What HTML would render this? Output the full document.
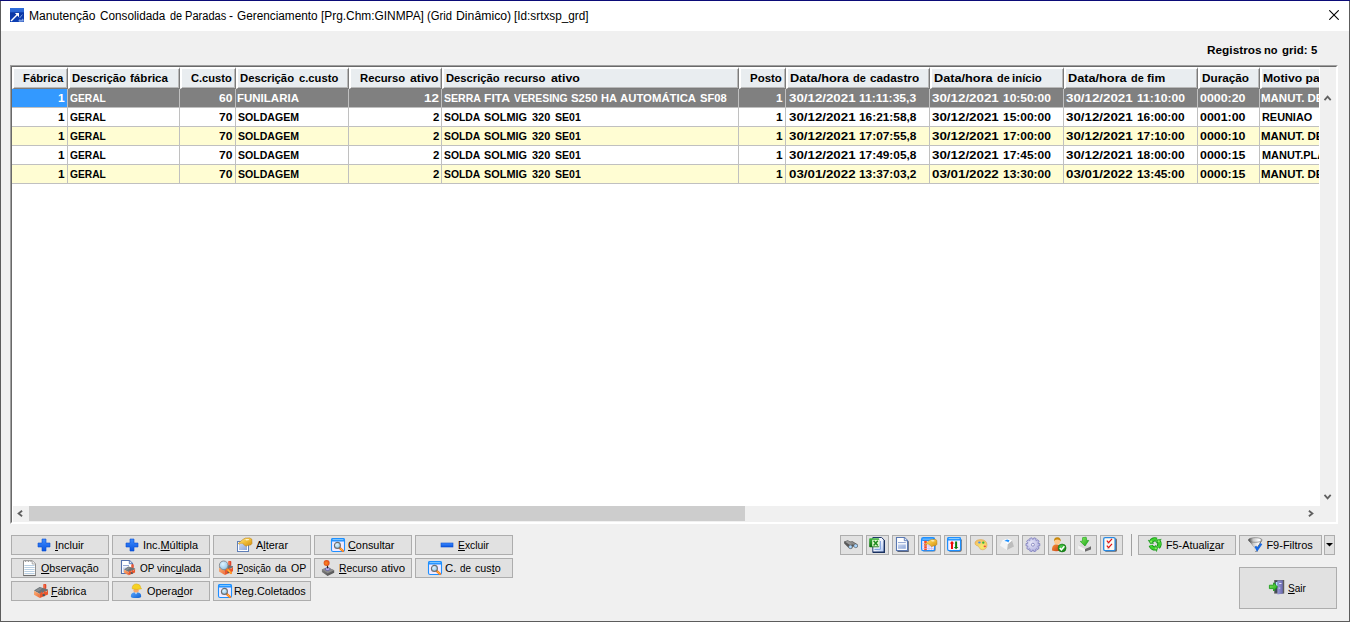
<!DOCTYPE html>
<html>
<head>
<meta charset="utf-8">
<title>Manutenção Consolidada de Paradas</title>
<style>
*{box-sizing:border-box;margin:0;padding:0}
html,body{width:1350px;height:622px;overflow:hidden;background:#f0f0f0}
body{position:relative;font-family:"Liberation Sans",sans-serif;font-size:11px;color:#000}
div,span,svg{position:absolute}
.t{white-space:nowrap;line-height:16px;height:16px;transform-origin:0 0}
u{text-decoration:underline;text-underline-offset:1px}
.ic{overflow:visible}
#titlebar{left:1px;top:1px;width:1348px;height:30px;background:#fff}
#topline{left:0;top:0;width:1350px;height:1px;background:#0b0b78}
#topgap{left:60px;top:0;width:20px;height:1px;background:#7a7a7a}
#lframe{left:0;top:1px;width:1px;height:621px;background:#5c5c5c}
#rframe{left:1349px;top:1px;width:1px;height:621px;background:#5c5c5c}
#bframe{left:0;top:621px;width:1350px;height:1px;background:#5c5c5c}
#grid{left:10px;top:65px;width:1328px;height:459px;background:#fff;border-style:solid;border-width:1px;border-color:#a0a0a0 #fff #fff #a0a0a0}
#gridin{left:11px;top:66px;width:1326px;height:457px;border-style:solid;border-width:1px;border-color:#696969 #fff #fff #696969}
#vsb{left:1320px;top:67px;width:16px;height:439px;background:#f0f0f0}
#hsb{left:13px;top:506px;width:1323px;height:16px;background:#f0f0f0}
#hthumb{left:29px;top:506px;width:716px;height:15px;background:#cdcdcd}
.h{top:67px;height:22px;background:#e9edf0;border-style:solid;border-color:#fff #7b7b7b #7b7b7b #fff;border-width:2px 1px 1px 2px}
.h i{position:absolute;right:0;top:0;bottom:0;width:1px;background:#b9b9b9}
.h b{position:absolute;left:0;right:0;bottom:0;height:1px;background:#b9b9b9}
.r{left:12px;width:1307px;height:18px}
.hl{left:12px;width:1307px;height:1px;background:#c0c0c0}
.vl{top:89px;width:1px;height:95px;background:#c0c0c0}
#clip{left:1260px;top:67px;width:59px;height:120px;overflow:hidden}
.btn{height:20px;background:#e1e1e1;border:1px solid #adadad}
</style>
</head>
<body>
<svg width="0" height="0" style="left:0;top:0"><defs>
<linearGradient id="gPlus" x1="0" y1="0" x2="0" y2="1"><stop offset="0" stop-color="#3d8bff"/><stop offset="1" stop-color="#0a55e0"/></linearGradient>
<linearGradient id="gGold" x1="0" y1="0" x2="1" y2="1"><stop offset="0" stop-color="#ffe9a0"/><stop offset=".45" stop-color="#f3c23c"/><stop offset="1" stop-color="#d08c12"/></linearGradient>
<linearGradient id="gForm" x1="0" y1="0" x2="1" y2="1"><stop offset="0" stop-color="#c9d6f0"/><stop offset="1" stop-color="#8fa8d8"/></linearGradient>
<linearGradient id="gWallL" x1="0" y1="0" x2="1" y2="1"><stop offset="0" stop-color="#f9b27a"/><stop offset="1" stop-color="#ee6a34"/></linearGradient>
<linearGradient id="gBody" x1="0" y1="0" x2="1" y2="1"><stop offset="0" stop-color="#5aa8ff"/><stop offset="1" stop-color="#0f5fd0"/></linearGradient>
<radialGradient id="gGlass" cx=".4" cy=".35" r=".7"><stop offset="0" stop-color="#dff4ff"/><stop offset="1" stop-color="#8fc4e6"/></radialGradient>
<radialGradient id="gBall" cx=".45" cy=".55" r=".6"><stop offset="0" stop-color="#ff8a20"/><stop offset="1" stop-color="#d8401c"/></radialGradient>
<linearGradient id="gBase" x1="0" y1="0" x2="1" y2="1"><stop offset="0" stop-color="#8a8a8a"/><stop offset="1" stop-color="#4a4a4a"/></linearGradient>
<linearGradient id="gSheet" x1="0" y1="0" x2="1" y2="1"><stop offset="0" stop-color="#ffffff"/><stop offset=".5" stop-color="#eef3ff"/><stop offset="1" stop-color="#a4bff0"/></linearGradient>
<linearGradient id="gGreenBox" x1="0" y1="0" x2="0" y2="1"><stop offset="0" stop-color="#3fb53f"/><stop offset="1" stop-color="#0a6a0a"/></linearGradient>
<radialGradient id="gPal" cx=".6" cy=".7" r=".8"><stop offset="0" stop-color="#f6ee6a"/><stop offset="1" stop-color="#f2b868"/></radialGradient>
<radialGradient id="gGear" cx=".4" cy=".4" r=".7"><stop offset="0" stop-color="#ececfa"/><stop offset="1" stop-color="#a8a8dc"/></radialGradient>
<radialGradient id="gChk" cx=".4" cy=".35" r=".7"><stop offset="0" stop-color="#4fd04f"/><stop offset="1" stop-color="#0d7a0d"/></radialGradient>
<linearGradient id="gUser" x1="0" y1="0" x2="1" y2="1"><stop offset="0" stop-color="#f59030"/><stop offset="1" stop-color="#c8401c"/></linearGradient>
<linearGradient id="gArrG" x1="0" y1="0" x2="1" y2="1"><stop offset="0" stop-color="#8af060"/><stop offset="1" stop-color="#18a018"/></linearGradient>
<linearGradient id="gFun" x1="0" y1="0" x2="1" y2="0"><stop offset="0" stop-color="#3a3a3a"/><stop offset=".35" stop-color="#c8c8c8"/><stop offset=".8" stop-color="#ffffff"/><stop offset="1" stop-color="#b0b0b0"/></linearGradient>
<linearGradient id="gDoor" x1="0" y1="0" x2="1" y2="0"><stop offset="0" stop-color="#9a9ad8"/><stop offset="1" stop-color="#6a6ab0"/></linearGradient>
<linearGradient id="gApp" x1="0" y1="0" x2="0" y2="1"><stop offset="0" stop-color="#2f6edc"/><stop offset=".28" stop-color="#2a64d2"/><stop offset=".34" stop-color="#0a35a2"/><stop offset="1" stop-color="#0d3fb4"/></linearGradient>
</defs></svg>
<div id="titlebar"></div><div id="topline"></div><div id="topgap"></div><div id="lframe"></div><div id="rframe"></div><div id="bframe"></div>
<svg class="ic" style="left:10px;top:8px" width="14" height="14" viewBox="0 0 14 14"><rect x="0" y="0" width="14" height="14" fill="url(#gApp)"/><path d="M1 13L7.4 6.6" stroke="#fff" stroke-width="1.4"/><path d="M4.9 5.1H9V9.2z" fill="#fff"/><path d="M9.6 10L12.4 6.6" stroke="#9ab8f0" stroke-width="1" opacity=".8"/><path d="M8.4 12.6L10 11L11 12.4L12.4 10.4L13.6 11.4L13.8 13.6L9 13.8z" fill="#a8c4f4" opacity=".75"/></svg>
<svg style="left:1329px;top:10px" width="10" height="10" viewBox="0 0 10 10"><path d="M0.3 0.3L9.7 9.7M9.7 0.3L0.3 9.7" stroke="#000" stroke-width="1.1" fill="none"/></svg>
<div id="grid"></div><div id="gridin"></div>
<div class="h" style="left:12px;width:56px"><i></i><b></b></div>
<div class="h" style="left:68px;width:112px"><i></i><b></b></div>
<div class="h" style="left:180px;width:56px"><i></i><b></b></div>
<div class="h" style="left:236px;width:113px"><i></i><b></b></div>
<div class="h" style="left:349px;width:93px"><i></i><b></b></div>
<div class="h" style="left:442px;width:297px"><i></i><b></b></div>
<div class="h" style="left:739px;width:47px"><i></i><b></b></div>
<div class="h" style="left:786px;width:144px"><i></i><b></b></div>
<div class="h" style="left:930px;width:134px"><i></i><b></b></div>
<div class="h" style="left:1064px;width:134px"><i></i><b></b></div>
<div class="h" style="left:1198px;width:62px"><i></i><b></b></div>
<div class="h" style="left:1260px;width:59px;border-right:0"><b></b></div>
<div class="r" style="top:89px;background:#808080"></div>
<div class="r" style="top:108px;background:#fff"></div>
<div class="r" style="top:127px;background:#fffdd3"></div>
<div class="r" style="top:146px;background:#fff"></div>
<div class="r" style="top:165px;background:#fffdd3"></div>
<div style="left:12px;top:89px;width:55px;height:18px;background:#3399ff"></div>
<div class="hl" style="top:107px"></div>
<div class="hl" style="top:126px"></div>
<div class="hl" style="top:145px"></div>
<div class="hl" style="top:164px"></div>
<div class="hl" style="top:183px"></div>
<div class="vl" style="left:67px"></div>
<div class="vl" style="left:179px"></div>
<div class="vl" style="left:235px"></div>
<div class="vl" style="left:348px"></div>
<div class="vl" style="left:441px"></div>
<div class="vl" style="left:738px"></div>
<div class="vl" style="left:785px"></div>
<div class="vl" style="left:929px"></div>
<div class="vl" style="left:1063px"></div>
<div class="vl" style="left:1197px"></div>
<div class="vl" style="left:1259px"></div>
<div id="vsb"></div><div id="hsb"></div><div id="hthumb"></div>
<svg style="left:1323px;top:94px" width="10" height="8" viewBox="0 0 10 8"><path d="M1.5 6.1L4.6 2.7L7.7 6.1" stroke="#606060" stroke-width="1.8" fill="none"/></svg>
<svg style="left:1323px;top:493px" width="10" height="8" viewBox="0 0 10 8"><path d="M1.5 1.9L4.6 5.3L7.7 1.9" stroke="#606060" stroke-width="1.8" fill="none"/></svg>
<svg style="left:16px;top:509px" width="8" height="10" viewBox="0 0 8 10"><path d="M6.1 1.8L2.6 4.5L6.1 7.2" stroke="#606060" stroke-width="1.8" fill="none"/></svg>
<svg style="left:1307px;top:509px" width="8" height="10" viewBox="0 0 8 10"><path d="M1.9 1.8L5.4 4.5L1.9 7.2" stroke="#606060" stroke-width="1.8" fill="none"/></svg>
<div id="clip"><span class="t" style="left:3.34px;top:3.02px;font-size:11.5px;font-weight:bold;transform:scaleX(1.0566);">Motivo pa</span><span class="t" style="left:1.36px;top:23.19px;font-size:11px;font-weight:bold;color:#fff;transform:scaleX(1.0431);">MANUT. DE</span><span class="t" style="left:1.51px;top:42.19px;font-size:11px;font-weight:bold;transform:scaleX(0.99);">REUNIAO</span><span class="t" style="left:1.36px;top:61.19px;font-size:11px;font-weight:bold;transform:scaleX(1.0431);">MANUT. DE</span><span class="t" style="left:1.51px;top:80.19px;font-size:11px;font-weight:bold;transform:scaleX(0.9945);">MANUT.PLA</span><span class="t" style="left:1.36px;top:99.19px;font-size:11px;font-weight:bold;transform:scaleX(1.0431);">MANUT. DE</span></div>
<div class="btn" style="left:11px;top:535px;width:98px"></div>
<svg class="ic" style="left:36px;top:537px" width="16" height="16" viewBox="0 0 16 16"><path d="M6 2h4v4h4v4h-4v4H6v-4H2V6h4z" fill="url(#gPlus)" stroke="#0a4fd0" stroke-width="0.6" stroke-linejoin="miter"/></svg>
<div class="btn" style="left:112px;top:535px;width:98px"></div>
<svg class="ic" style="left:124px;top:537px" width="16" height="16" viewBox="0 0 16 16"><path d="M6 2h4v4h4v4h-4v4H6v-4H2V6h4z" fill="url(#gPlus)" stroke="#0a4fd0" stroke-width="0.6" stroke-linejoin="miter"/></svg>
<div class="btn" style="left:213px;top:535px;width:98px"></div>
<svg class="ic" style="left:236px;top:537px" width="16" height="16" viewBox="0 0 16 16"><rect x="1.5" y="4.5" width="11" height="10" fill="#fff" stroke="#5f7fb8"/><rect x="3" y="7" width="8" height="6" fill="url(#gForm)"/><g transform="translate(2.2,0.9)"><path d="M0 5.6L2.2 3.6L4.6 1.6L7 0.2L11.5 0L13.6 1.2L13.8 5.6L12.6 7L9.4 7.6L7.6 8.4L6.2 7L4.4 5.6L2.6 5.4L1 6.4z" fill="url(#gGold)" stroke="#b57a10" stroke-width="0.5"/><path d="M7 1.2L10.5 1L11 2.2L8 2.6z" fill="#fff6d8" opacity=".9"/></g></svg>
<div class="btn" style="left:314px;top:535px;width:98px"></div>
<svg class="ic" style="left:330px;top:537px" width="16" height="16" viewBox="0 0 16 16"><rect x="1.5" y="1.5" width="13" height="13" rx="1.6" fill="#f1eaff" stroke="#1e90ff" stroke-width="1.1"/><path d="M1.2 4.4V2.6Q1.2 1.1 2.7 1.1H13.3Q14.8 1.1 14.8 2.6V4.4z" fill="#1e90ff"/><rect x="2.6" y="2.2" width="10.8" height="0.9" fill="#8fd0ff"/><path d="M9.6 10.8L12.9 13.9" stroke="#ff7a1a" stroke-width="2.3" stroke-linecap="round"/><path d="M10.4 11.5L12.6 13.6" stroke="#ffd83a" stroke-width="0.8"/><circle cx="7.4" cy="8.4" r="3" fill="url(#gGlass)" stroke="#6e6e6e" stroke-width="1.1"/></svg>
<div class="btn" style="left:415px;top:535px;width:98px"></div>
<svg class="ic" style="left:439px;top:537px" width="16" height="16" viewBox="0 0 16 16"><rect x="2" y="6" width="12" height="4" fill="url(#gPlus)" stroke="#0a4fd0" stroke-width="0.6"/></svg>
<div class="btn" style="left:11px;top:558px;width:98px"></div>
<svg class="ic" style="left:21px;top:560px" width="16" height="16" viewBox="0 0 16 16"><path d="M2.5 0.7H11.4L14.5 3.8V15.4H2.5z" fill="#fff" stroke="#8f8f8f" stroke-width="1"/><path d="M11.2 0.8V4H14.4" fill="#eee" stroke="#9a9a9a" stroke-width=".8"/><path d="M3.4 5.5H13.6M3.4 7.5H13.6M3.4 9.5H13.6M3.4 11.5H13.6M3.4 13.5H13.6" stroke="#b9cfe2" stroke-width="1"/><path d="M2.2 15.6H14.8" stroke="#6a6a6a" stroke-width="1"/><path d="M4.6 0.6v1.4M7.4 0.6v1.4M10 0.6v1.4" stroke="#9a9a9a" stroke-width="1"/></svg>
<div class="btn" style="left:112px;top:558px;width:98px"></div>
<svg class="ic" style="left:120px;top:560px" width="16" height="16" viewBox="0 0 16 16"><path d="M1.5 0.5H9.5L12.5 3.5V13.5H1.5z" fill="#fff" stroke="#5470ac" stroke-width="1.1"/><path d="M9.3 0.6V3.7H12.4" fill="#dfe6f6" stroke="#5470ac" stroke-width=".9"/><path d="M3 5.6H9" stroke="#8c9fd0" stroke-width="1"/><rect x="3" y="7.4" width="5" height="5" fill="#c6d2ee"/><g transform="translate(4,4.2) scale(.79)"><rect x="9.3" y="0" width="3" height="5" rx="0.9" fill="#e2452a"/><rect x="9.3" y="0.3" width="1.3" height="4.5" rx="0.6" fill="#f6825a"/><path d="M0 6.6L5.6 3L14 5.4L14 6.4L6 10z" fill="#6c7276"/><path d="M1.4 6.5L5.7 3.8L8.4 4.6L4.2 7.6z" fill="#858b8f"/><path d="M0 6.8L5.9 9.9L5.9 14L0 10.7z" fill="url(#gWallL)"/><path d="M5.9 9.9L7.6 7.6L9 9.4L10.6 6.6L12 8.2L14 5.8L14 10.4L5.9 14z" fill="#ea562c"/><rect x="8.6" y="10.2" width="2.2" height="2" fill="#3f5862"/></g></svg>
<div class="btn" style="left:213px;top:558px;width:98px"></div>
<svg class="ic" style="left:218px;top:560px" width="16" height="16" viewBox="0 0 16 16"><g transform="translate(1,0.9)"><rect x="9.3" y="0" width="3" height="5" rx="0.9" fill="#e2452a"/><rect x="9.3" y="0.3" width="1.3" height="4.5" rx="0.6" fill="#f6825a"/><path d="M0 6.6L5.6 3L14 5.4L14 6.4L6 10z" fill="#6c7276"/><path d="M1.4 6.5L5.7 3.8L8.4 4.6L4.2 7.6z" fill="#858b8f"/><path d="M0 6.8L5.9 9.9L5.9 14L0 10.7z" fill="url(#gWallL)"/><path d="M5.9 9.9L7.6 7.6L9 9.4L10.6 6.6L12 8.2L14 5.8L14 10.4L5.9 14z" fill="#ea562c"/><rect x="8.6" y="10.2" width="2.2" height="2" fill="#3f5862"/></g><path d="M9.4 9.4L13 13" stroke="#ff8a1a" stroke-width="2.2" stroke-linecap="round"/><path d="M10.2 10L12.6 12.4" stroke="#ffe04a" stroke-width="0.8"/><circle cx="5.7" cy="5.3" r="4.3" fill="url(#gGlass)" stroke="#8a8f94" stroke-width="1"/></svg>
<div class="btn" style="left:314px;top:558px;width:98px"></div>
<svg class="ic" style="left:321px;top:560px" width="16" height="16" viewBox="0 0 16 16"><path d="M0.9 9.2L7 7.4L13.2 10.2L13.2 12.8L6.6 16L0.9 12z" fill="url(#gBase)"/><path d="M0.9 9.2L7 7.4L13.2 10.2L6.6 13.2z" fill="#8c8c8c"/><ellipse cx="6.6" cy="9" rx="2.4" ry="1.5" fill="#b8b0f0" stroke="#4a4a9a" stroke-width=".6"/><path d="M6.3 4.5L6.7 8.4" stroke="#222" stroke-width="1.1"/><circle cx="5.6" cy="2.9" r="3" fill="url(#gBall)"/></svg>
<div class="btn" style="left:415px;top:558px;width:98px"></div>
<svg class="ic" style="left:427px;top:560px" width="16" height="16" viewBox="0 0 16 16"><rect x="1.5" y="1.5" width="13" height="13" rx="1.6" fill="#f1eaff" stroke="#1e90ff" stroke-width="1.1"/><path d="M1.2 4.4V2.6Q1.2 1.1 2.7 1.1H13.3Q14.8 1.1 14.8 2.6V4.4z" fill="#1e90ff"/><rect x="2.6" y="2.2" width="10.8" height="0.9" fill="#8fd0ff"/><path d="M9.6 10.8L12.9 13.9" stroke="#ff7a1a" stroke-width="2.3" stroke-linecap="round"/><path d="M10.4 11.5L12.6 13.6" stroke="#ffd83a" stroke-width="0.8"/><circle cx="7.4" cy="8.4" r="3" fill="url(#gGlass)" stroke="#6e6e6e" stroke-width="1.1"/></svg>
<div class="btn" style="left:11px;top:581px;width:98px"></div>
<svg class="ic" style="left:33px;top:583px" width="16" height="16" viewBox="0 0 16 16"><g transform="translate(1,1)"><rect x="9.3" y="0" width="3" height="5" rx="0.9" fill="#e2452a"/><rect x="9.3" y="0.3" width="1.3" height="4.5" rx="0.6" fill="#f6825a"/><path d="M0 6.6L5.6 3L14 5.4L14 6.4L6 10z" fill="#6c7276"/><path d="M1.4 6.5L5.7 3.8L8.4 4.6L4.2 7.6z" fill="#858b8f"/><path d="M0 6.8L5.9 9.9L5.9 14L0 10.7z" fill="url(#gWallL)"/><path d="M5.9 9.9L7.6 7.6L9 9.4L10.6 6.6L12 8.2L14 5.8L14 10.4L5.9 14z" fill="#ea562c"/><rect x="8.6" y="10.2" width="2.2" height="2" fill="#3f5862"/></g></svg>
<div class="btn" style="left:112px;top:581px;width:98px"></div>
<svg class="ic" style="left:129px;top:583px" width="16" height="16" viewBox="0 0 16 16"><path d="M1.8 13.4Q1.6 9.2 7 9.2Q12.4 9.2 12.2 13.4Q12 15 7 15Q2 15 1.8 13.4z" fill="url(#gBody)"/><path d="M6 9.2L7 11.6L8 9.2z" fill="#fff"/><rect x="4.4" y="5.4" width="5.4" height="4.2" rx="2" fill="#f8a868"/><path d="M3.2 5.8Q3 1 7.6 0.9Q11.6 1 11.8 4.8L12.6 5.8Q8 7 3.2 5.8z" fill="#f6d224" stroke="#d8a810" stroke-width=".5"/></svg>
<div class="btn" style="left:213px;top:581px;width:98px"></div>
<svg class="ic" style="left:217px;top:583px" width="16" height="16" viewBox="0 0 16 16"><rect x="1.5" y="1.5" width="13" height="13" rx="1.6" fill="#f1eaff" stroke="#1e90ff" stroke-width="1.1"/><path d="M1.2 4.4V2.6Q1.2 1.1 2.7 1.1H13.3Q14.8 1.1 14.8 2.6V4.4z" fill="#1e90ff"/><rect x="2.6" y="2.2" width="10.8" height="0.9" fill="#8fd0ff"/><path d="M9.6 10.8L12.9 13.9" stroke="#ff7a1a" stroke-width="2.3" stroke-linecap="round"/><path d="M10.4 11.5L12.6 13.6" stroke="#ffd83a" stroke-width="0.8"/><circle cx="7.4" cy="8.4" r="3" fill="url(#gGlass)" stroke="#6e6e6e" stroke-width="1.1"/></svg>
<div class="btn" style="left:840px;top:535px;width:23px"></div>
<svg class="ic" style="left:843px;top:537px" width="16" height="16" viewBox="0 0 16 16"><path d="M1 4.6L4.8 3.2L7 4.4L9.6 4.2L14.6 7.6L14.6 10L12.6 10.8L10.6 9.6L9.4 9.8L9.6 11L7.6 12L5.2 10.6L1.2 6.4z" fill="#585858"/><path d="M2 4.8L5 3.8L10 7.2L7 8z" fill="#9a9a9a"/><path d="M6.4 5.4L9.4 4.8L13.6 7.6L11.6 8.2z" fill="#8a8a8a"/><circle cx="7.4" cy="9.9" r="1.8" fill="#a8d6ff" stroke="#555" stroke-width=".5"/><circle cx="12.7" cy="8.8" r="1.9" fill="#a8d6ff" stroke="#555" stroke-width=".5"/></svg>
<div class="btn" style="left:866px;top:535px;width:23px"></div>
<svg class="ic" style="left:869px;top:537px" width="16" height="16" viewBox="0 0 16 16"><path d="M3.8 0.5H12.6L15.5 3.4V15.5H3.8z" fill="url(#gSheet)" stroke="#20396b" stroke-width="1"/><path d="M15.3 3.2V15.3H4" fill="none" stroke="#1a3160" stroke-width="1.4"/><path d="M5.6 12.4H9M11.4 4V12.4H5.6" stroke="#7fa0de" stroke-width="1" fill="none"/><rect x="0.2" y="1.2" width="10" height="9" rx="0.8" fill="url(#gGreenBox)"/><rect x="3.2" y="2.8" width="7" height="6.6" fill="#e2f7d2"/><path d="M4.6 3.8L8.8 8.4M8.8 3.8L4.6 8.4" stroke="#1d8a1d" stroke-width="1.5"/></svg>
<div class="btn" style="left:892px;top:535px;width:23px"></div>
<svg class="ic" style="left:895px;top:537px" width="16" height="16" viewBox="0 0 16 16"><path d="M2.4 1.6H10.4L13.8 4.6V15H2.4z" fill="#39435c" opacity=".8"/><path d="M1.5 0.5H9.5L12.5 3.5V13.5H1.5z" fill="#fff" stroke="#5a78b2" stroke-width="1.1"/><path d="M9.3 0.6V3.7H12.4" fill="#e4eaf8" stroke="#5a78b2" stroke-width=".9"/><path d="M3 5.6H10.8" stroke="#8fa4d2" stroke-width="1"/><rect x="3" y="7.4" width="7.8" height="4.4" fill="url(#gForm)"/></svg>
<div class="btn" style="left:918px;top:535px;width:23px"></div>
<svg class="ic" style="left:921px;top:537px" width="16" height="16" viewBox="0 0 16 16"><rect x="1.6" y="1.6" width="13" height="13" rx="1.6" fill="#3a3030" opacity=".55"/><rect x="0.6" y="0.6" width="13" height="13" rx="1.6" fill="#f1eaff" stroke="#1e90ff" stroke-width="1.2"/><rect x="1.2" y="1" width="11.8" height="3" fill="#1e90ff"/><rect x="2" y="1.7" width="10" height=".8" fill="#9ad4ff"/><rect x="3.2" y="3.8" width="2.6" height="9.4" fill="#ff4a1c"/><path d="M1.4 6.5H13M1.4 9H13M1.4 11.5H13M8 4V13M10.5 4V13" stroke="#c8b8f0" stroke-width=".6"/><g transform="translate(3.9,2.3) scale(.88)"><path d="M0 5.6L2.2 3.6L4.6 1.6L7 0.2L11.5 0L13.6 1.2L13.8 5.6L12.6 7L9.4 7.6L7.6 8.4L6.2 7L4.4 5.6L2.6 5.4L1 6.4z" fill="url(#gGold)" stroke="#b57a10" stroke-width="0.5"/><path d="M7 1.2L10.5 1L11 2.2L8 2.6z" fill="#fff6d8" opacity=".9"/></g></svg>
<div class="btn" style="left:944px;top:535px;width:23px"></div>
<svg class="ic" style="left:947px;top:537px" width="16" height="16" viewBox="0 0 16 16"><rect x="1.7" y="1.7" width="13" height="13" rx="1.6" fill="#3a3030" opacity=".75"/><rect x="0.6" y="0.6" width="13" height="13" rx="1.6" fill="#f6f0ff" stroke="#1e90ff" stroke-width="1.2"/><path d="M0.2 3.6V1.8Q0.2 0.1 1.8 0.1H12.4Q14 0.1 14 1.8V3.6z" fill="#1e90ff"/><rect x="1.6" y="1.2" width="11" height="0.9" fill="#a8dcff"/><path d="M5 4L7.3 6.4H6V12H4V6.4H2.7z" fill="#f00808"/><path d="M9.1 12.3L6.8 9.9H8.1V4.4H10.1V9.9H11.4z" fill="#0a7a0a"/></svg>
<div class="btn" style="left:970px;top:535px;width:23px"></div>
<svg class="ic" style="left:973px;top:537px" width="16" height="16" viewBox="0 0 16 16"><path d="M2 5.2Q3.4 2.4 8 2.6Q13.6 3 14 7.6Q14 12.6 9.6 12.8Q7 12.8 6.4 10.8Q5.8 8.8 3.4 8.4Q1.4 7.6 2 5.2z" fill="url(#gPal)" stroke="#d8a040" stroke-width=".5"/><ellipse cx="6.4" cy="5.5" rx="1.3" ry="1" fill="#4a90ee"/><ellipse cx="10.3" cy="5.7" rx="1.2" ry="1.1" fill="#38b838"/><ellipse cx="11.8" cy="9.3" rx="1.2" ry=".9" fill="#f04848"/></svg>
<div class="btn" style="left:996px;top:535px;width:23px"></div>
<svg class="ic" style="left:999px;top:537px" width="16" height="16" viewBox="0 0 16 16"><path d="M1 8.6L3.4 3.2L9 1.8L13 3.6L15 9.4L8 13z" fill="#e9e9e9"/><path d="M8 13L8.6 7.2L13 3.6L15 9.4z" fill="#bdbdbd"/><path d="M1 8.6L3.4 3.2L8.6 7.2L8 13z" fill="#f4f4f4"/><path d="M3.4 3.2L9 1.8L13 3.6L8.6 7.2z" fill="#fff"/><path d="M5.2 4L8 2.6L10.6 3.2L9.2 5.6L8.2 4.4z" fill="#1e90ff"/></svg>
<div class="btn" style="left:1022px;top:535px;width:23px"></div>
<svg class="ic" style="left:1025px;top:537px" width="16" height="16" viewBox="0 0 16 16"><path d="M14.80 6.52L14.80 8.88L13.02 9.06L12.84 9.61L14.18 10.80L12.79 12.71L11.24 11.81L10.78 12.15L11.16 13.90L8.91 14.63L8.19 12.99L7.61 12.99L6.89 14.63L4.64 13.90L5.02 12.15L4.56 11.81L3.01 12.71L1.62 10.80L2.96 9.61L2.78 9.06L1.00 8.88L1.00 6.52L2.78 6.34L2.96 5.79L1.62 4.60L3.01 2.69L4.56 3.59L5.02 3.25L4.64 1.50L6.89 0.77L7.61 2.41L8.19 2.41L8.91 0.77L11.16 1.50L10.78 3.25L11.24 3.59L12.79 2.69L14.18 4.60L12.84 5.79L13.02 6.34z" fill="url(#gGear)" stroke="#7c7cbc" stroke-width=".8" stroke-linejoin="round"/><circle cx="7.9" cy="7.7" r="1.5" fill="#f4f4fa" stroke="#7a7ab8" stroke-width=".8"/></svg>
<div class="btn" style="left:1048px;top:535px;width:23px"></div>
<svg class="ic" style="left:1051px;top:537px" width="16" height="16" viewBox="0 0 16 16"><path d="M1 13.6Q0.6 7.4 5.4 7.2Q10 7.4 9.8 13.6Q5 15 1 13.6z" fill="url(#gUser)"/><circle cx="6.2" cy="4.4" r="3" fill="#ffc888"/><path d="M3 4.2Q2.8 0.2 6.4 0.2Q10 0.4 9.8 4.4Q8.6 2.4 6.4 2.6Q4 2.4 3 4.2z" fill="#c8880c"/><circle cx="11.1" cy="11" r="4" fill="url(#gChk)" stroke="#0a6a0a" stroke-width=".5"/><path d="M8.8 11L10.4 12.8L13.4 9.2" stroke="#fff" stroke-width="1.5" fill="none"/></svg>
<div class="btn" style="left:1074px;top:535px;width:23px"></div>
<svg class="ic" style="left:1077px;top:537px" width="16" height="16" viewBox="0 0 16 16"><path d="M1.2 8.4L5.4 6.6L14 9.6L14 12.4L8 14.8L1.2 11.4z" fill="#f4f4f4"/><path d="M8 14.8L8 11.6L14 9L14 12.4z" fill="#6a6a6a"/><path d="M1.2 8.4L5.4 6.6L14 9.6L8 12z" fill="#d8d8d8"/><path d="M5.6 0.6L9.2 0.2L9.8 3.6L11.8 3.4L8 9L3.2 4.4L5.4 4.2z" fill="url(#gArrG)" stroke="#18a018" stroke-width=".6"/></svg>
<div class="btn" style="left:1100px;top:535px;width:23px"></div>
<svg class="ic" style="left:1103px;top:537px" width="16" height="16" viewBox="0 0 16 16"><rect x="1.9" y="1.4" width="12" height="13.4" rx="1.4" fill="#3a3030" opacity=".7"/><rect x="0.7" y="0.6" width="11.4" height="13" rx="1.4" fill="#fffaf2" stroke="#2a8ae2" stroke-width="1.3"/><rect x="4" y="5" width="2.6" height="2.2" fill="#d8d8d8"/><rect x="4" y="10" width="2.6" height="2.2" fill="#d8d8d8"/><path d="M3.8 3.6L5.6 5.6L9 1.8" stroke="#e21010" stroke-width="1.2" fill="none"/><path d="M3.8 8.6L5.6 10.6L9 6.8" stroke="#e21010" stroke-width="1.2" fill="none"/></svg>
<div style="left:1131px;top:534px;width:1px;height:22px;background:#a0a0a0"></div>
<div class="btn" style="left:1138px;top:535px;width:98px"></div><svg class="ic" style="left:1147px;top:537px" width="16" height="16" viewBox="0 0 16 16"><path d="M9.61 2.70A4.5 4.5 0 0 0 4.06 4.72" stroke="#149414" stroke-width="4.4" fill="none"/><path d="M9.61 2.70A4.5 4.5 0 0 0 4.06 4.72" stroke="#3fd030" stroke-width="2.6" fill="none"/><path d="M3.50 6.82L1.18 3.12L6.78 6.22z" fill="#22b022" stroke="#149414" stroke-width=".5"/><circle cx="4.06" cy="4.72" r="1.1" fill="#8af060"/><path d="M11.13 10.14A4.5 4.5 0 0 0 11.64 4.25" stroke="#149414" stroke-width="4.4" fill="none"/><path d="M11.13 10.14A4.5 4.5 0 0 0 11.64 4.25" stroke="#3fd030" stroke-width="2.6" fill="none"/><path d="M9.97 2.86L14.31 2.32L9.13 6.08z" fill="#22b022" stroke="#149414" stroke-width=".5"/><circle cx="11.64" cy="4.25" r="1.1" fill="#8af060"/><path d="M3.75 8.37A4.5 4.5 0 0 0 8.86 11.32" stroke="#149414" stroke-width="4.4" fill="none"/><path d="M3.75 8.37A4.5 4.5 0 0 0 8.86 11.32" stroke="#3fd030" stroke-width="2.6" fill="none"/><path d="M10.83 10.40L9.49 14.56L8.27 8.27z" fill="#22b022" stroke="#149414" stroke-width=".5"/><circle cx="8.86" cy="11.32" r="1.1" fill="#8af060"/></svg>
<div class="btn" style="left:1239px;top:535px;width:83px"></div><svg class="ic" style="left:1247px;top:537px" width="16" height="16" viewBox="0 0 16 16"><path d="M2 3.6L8 11.4V14.4L10.6 14.4V11.4L15 3.6z" fill="#5a5a5a"/><path d="M1.6 3.4L7.6 11V14L9.6 14V11L14.4 3.4z" fill="url(#gFun)"/><ellipse cx="8.2" cy="3" rx="6.9" ry="2.3" fill="url(#gFun)" stroke="#6a6a6a" stroke-width=".6"/><path d="M8.4 9.2L10.2 12.6L14.4 6.6" stroke="#1a6ae2" stroke-width="2.2" fill="none"/></svg>
<div class="btn" style="left:1324px;top:535px;width:11px"></div>
<svg style="left:1326px;top:543px" width="7" height="4" viewBox="0 0 7 4"><path d="M0 0H7L3.5 3.6z" fill="#000"/></svg>
<div class="btn" style="left:1239px;top:567px;width:98px;height:42px"></div><svg class="ic" style="left:1269px;top:579px" width="16" height="16" viewBox="0 0 16 16"><rect x="5.2" y="1" width="10" height="13.6" fill="#5c5c5c"/><rect x="6.2" y="2" width="2.4" height="11.6" fill="#3c4a54"/><rect x="6.8" y="3" width="1.8" height="4.4" fill="#a8e4ff"/><path d="M8.4 1.6L13.8 1.2V14.6L8.4 15.4z" fill="url(#gDoor)"/><rect x="9.6" y="8.6" width="1.6" height="1" fill="#d8d8f0"/><rect x="10" y="4" width="2.6" height="1" rx=".5" fill="#e4e4fa"/><path d="M0.4 6.2H4.6V3.8L8.4 7.9L4.6 12V9.6H0.4z" fill="url(#gArrG)" stroke="#0f960f" stroke-width=".8"/></svg>
<span class="t" style="left:29.49px;top:7.84px;font-size:12px;transform:scaleX(1.0077);">Manutenção</span><span class="t" style="left:99.82px;top:7.84px;font-size:12px;transform:scaleX(0.9788);">Consolidada</span><span class="t" style="left:170.10px;top:7.84px;font-size:12px;transform:scaleX(0.9077);">de</span><span class="t" style="left:184.88px;top:7.84px;font-size:12px;transform:scaleX(0.9233);">Paradas</span><span class="t" style="left:229.00px;top:7.84px;font-size:12px;">-</span><span class="t" style="left:236.82px;top:7.84px;font-size:12px;transform:scaleX(0.9827);">Gerenciamento</span><span class="t" style="left:321.01px;top:7.84px;font-size:12px;transform:scaleX(0.9912);">[Prg.Chm:GINMPA]</span><span class="t" style="left:427.46px;top:7.84px;font-size:12px;transform:scaleX(0.936);">(Grid</span><span class="t" style="left:455.78px;top:7.84px;font-size:12px;transform:scaleX(1.0212);">Dinâmico)</span><span class="t" style="left:513.92px;top:7.84px;font-size:12px;transform:scaleX(0.9797);">[Id:srtxsp_grd]</span><span class="t" style="left:1207.42px;top:42.19px;font-size:11px;font-weight:bold;transform:scaleX(1.0755);">Registros</span><span class="t" style="left:1264.49px;top:42.19px;font-size:11px;font-weight:bold;transform:scaleX(1.0083);">no</span><span class="t" style="left:1281.90px;top:42.19px;font-size:11px;font-weight:bold;transform:scaleX(1.0417);">grid:</span><span class="t" style="left:1310.80px;top:42.19px;font-size:11px;font-weight:bold;transform:scaleX(1.0333);">5</span><span class="t" style="left:22.62px;top:70.02px;font-size:11.5px;font-weight:bold;transform:scaleX(0.9825);">Fábrica</span><span class="t" style="left:71.72px;top:70.02px;font-size:11.5px;font-weight:bold;transform:scaleX(0.9796);">Descrição</span><span class="t" style="left:130.00px;top:70.02px;font-size:11.5px;font-weight:bold;transform:scaleX(1.0079);">fábrica</span><span class="t" style="left:191.00px;top:70.02px;font-size:11.5px;font-weight:bold;transform:scaleX(0.9667);">C.custo</span><span class="t" style="left:239.62px;top:70.02px;font-size:11.5px;font-weight:bold;transform:scaleX(0.9833);">Descrição</span><span class="t" style="left:298.80px;top:70.02px;font-size:11.5px;font-weight:bold;transform:scaleX(0.975);">c.custo</span><span class="t" style="left:359.72px;top:70.02px;font-size:11.5px;font-weight:bold;transform:scaleX(0.98);">Recurso</span><span class="t" style="left:409.80px;top:70.02px;font-size:11.5px;font-weight:bold;transform:scaleX(1.0654);">ativo</span><span class="t" style="left:445.52px;top:70.02px;font-size:11.5px;font-weight:bold;transform:scaleX(0.9759);">Descrição</span><span class="t" style="left:503.92px;top:70.02px;font-size:11.5px;font-weight:bold;transform:scaleX(0.9829);">recurso</span><span class="t" style="left:550.60px;top:70.02px;font-size:11.5px;font-weight:bold;transform:scaleX(1.0731);">ativo</span><span class="t" style="left:749.60px;top:70.02px;font-size:11.5px;font-weight:bold;transform:scaleX(0.9968);">Posto</span><span class="t" style="left:789.59px;top:70.02px;font-size:11.5px;font-weight:bold;transform:scaleX(1.1096);">Data/hora</span><span class="t" style="left:852.60px;top:70.02px;font-size:11.5px;font-weight:bold;transform:scaleX(0.9538);">de</span><span class="t" style="left:869.50px;top:70.02px;font-size:11.5px;font-weight:bold;transform:scaleX(1.025);">cadastro</span><span class="t" style="left:933.59px;top:70.02px;font-size:11.5px;font-weight:bold;transform:scaleX(1.1058);">Data/hora</span><span class="t" style="left:996.70px;top:70.02px;font-size:11.5px;font-weight:bold;transform:scaleX(0.9462);">de</span><span class="t" style="left:1012.31px;top:70.02px;font-size:11.5px;font-weight:bold;transform:scaleX(0.9931);">início</span><span class="t" style="left:1067.59px;top:70.02px;font-size:11.5px;font-weight:bold;transform:scaleX(1.1058);">Data/hora</span><span class="t" style="left:1130.70px;top:70.02px;font-size:11.5px;font-weight:bold;transform:scaleX(0.9462);">de</span><span class="t" style="left:1147.00px;top:70.02px;font-size:11.5px;font-weight:bold;transform:scaleX(1.0529);">fim</span><span class="t" style="left:1201.58px;top:70.02px;font-size:11.5px;font-weight:bold;transform:scaleX(1.0222);">Duração</span><span class="t" style="left:57.92px;top:90.19px;font-size:11px;font-weight:bold;color:#fff;transform:scaleX(1.08);">1</span><span class="t" style="left:70.00px;top:90.19px;font-size:11px;font-weight:bold;color:#fff;transform:scaleX(0.9316);">GERAL</span><span class="t" style="left:219.40px;top:90.19px;font-size:11px;font-weight:bold;color:#fff;transform:scaleX(1.1);">60</span><span class="t" style="left:237.36px;top:90.19px;font-size:11px;font-weight:bold;color:#fff;transform:scaleX(1.0448);">FUNILARIA</span><span class="t" style="left:424.38px;top:90.19px;font-size:11px;font-weight:bold;color:#fff;transform:scaleX(1.2182);">12</span><span class="t" style="left:444.40px;top:90.19px;font-size:11px;font-weight:bold;color:#fff;transform:scaleX(0.9605);">SERRA</span><span class="t" style="left:484.20px;top:90.19px;font-size:11px;font-weight:bold;color:#fff;transform:scaleX(1.1045);">FITA</span><span class="t" style="left:513.70px;top:90.19px;font-size:11px;font-weight:bold;color:#fff;transform:scaleX(0.9446);">VERESING</span><span class="t" style="left:570.70px;top:90.19px;font-size:11px;font-weight:bold;color:#fff;transform:scaleX(1.036);">S250</span><span class="t" style="left:600.99px;top:90.19px;font-size:11px;font-weight:bold;color:#fff;transform:scaleX(1.0067);">HA</span><span class="t" style="left:620.20px;top:90.19px;font-size:11px;font-weight:bold;color:#fff;transform:scaleX(1.0315);">AUTOMÁTICA</span><span class="t" style="left:699.60px;top:90.19px;font-size:11px;font-weight:bold;color:#fff;transform:scaleX(1.0154);">SF08</span><span class="t" style="left:775.52px;top:90.19px;font-size:11px;font-weight:bold;color:#fff;transform:scaleX(1.08);">1</span><span class="t" style="left:788.50px;top:90.19px;font-size:11px;font-weight:bold;color:#fff;transform:scaleX(1.2091);">30/12/2021</span><span class="t" style="left:859.20px;top:90.19px;font-size:11px;font-weight:bold;color:#fff;transform:scaleX(1.1);">11:11:35,3</span><span class="t" style="left:932.30px;top:90.19px;font-size:11px;font-weight:bold;color:#fff;transform:scaleX(1.2127);">30/12/2021</span><span class="t" style="left:1003.11px;top:90.19px;font-size:11px;font-weight:bold;color:#fff;transform:scaleX(1.0884);">10:50:00</span><span class="t" style="left:1066.40px;top:90.19px;font-size:11px;font-weight:bold;color:#fff;transform:scaleX(1.2109);">30/12/2021</span><span class="t" style="left:1137.10px;top:90.19px;font-size:11px;font-weight:bold;color:#fff;transform:scaleX(1.1048);">11:10:00</span><span class="t" style="left:1200.00px;top:90.19px;font-size:11px;font-weight:bold;color:#fff;transform:scaleX(1.125);">0000:20</span><span class="t" style="left:57.92px;top:109.19px;font-size:11px;font-weight:bold;transform:scaleX(1.08);">1</span><span class="t" style="left:70.00px;top:109.19px;font-size:11px;font-weight:bold;transform:scaleX(0.9316);">GERAL</span><span class="t" style="left:219.40px;top:109.19px;font-size:11px;font-weight:bold;transform:scaleX(1.1);">70</span><span class="t" style="left:238.00px;top:109.19px;font-size:11px;font-weight:bold;transform:scaleX(0.9603);">SOLDAGEM</span><span class="t" style="left:432.80px;top:109.19px;font-size:11px;font-weight:bold;transform:scaleX(1.0333);">2</span><span class="t" style="left:444.40px;top:109.19px;font-size:11px;font-weight:bold;transform:scaleX(0.9447);">SOLDA</span><span class="t" style="left:484.30px;top:109.19px;font-size:11px;font-weight:bold;transform:scaleX(0.9907);">SOLMIG</span><span class="t" style="left:531.70px;top:109.19px;font-size:11px;font-weight:bold;transform:scaleX(0.9944);">320</span><span class="t" style="left:555.20px;top:109.19px;font-size:11px;font-weight:bold;transform:scaleX(0.9593);">SE01</span><span class="t" style="left:775.52px;top:109.19px;font-size:11px;font-weight:bold;transform:scaleX(1.08);">1</span><span class="t" style="left:788.50px;top:109.19px;font-size:11px;font-weight:bold;transform:scaleX(1.2091);">30/12/2021</span><span class="t" style="left:859.22px;top:109.19px;font-size:11px;font-weight:bold;transform:scaleX(1.0788);">16:21:58,8</span><span class="t" style="left:932.30px;top:109.19px;font-size:11px;font-weight:bold;transform:scaleX(1.2127);">30/12/2021</span><span class="t" style="left:1003.11px;top:109.19px;font-size:11px;font-weight:bold;transform:scaleX(1.0884);">15:00:00</span><span class="t" style="left:1066.40px;top:109.19px;font-size:11px;font-weight:bold;transform:scaleX(1.2109);">30/12/2021</span><span class="t" style="left:1137.12px;top:109.19px;font-size:11px;font-weight:bold;transform:scaleX(1.0791);">16:00:00</span><span class="t" style="left:1200.00px;top:109.19px;font-size:11px;font-weight:bold;transform:scaleX(1.125);">0001:00</span><span class="t" style="left:57.92px;top:128.19px;font-size:11px;font-weight:bold;transform:scaleX(1.08);">1</span><span class="t" style="left:70.00px;top:128.19px;font-size:11px;font-weight:bold;transform:scaleX(0.9316);">GERAL</span><span class="t" style="left:219.40px;top:128.19px;font-size:11px;font-weight:bold;transform:scaleX(1.1);">70</span><span class="t" style="left:238.00px;top:128.19px;font-size:11px;font-weight:bold;transform:scaleX(0.9603);">SOLDAGEM</span><span class="t" style="left:432.80px;top:128.19px;font-size:11px;font-weight:bold;transform:scaleX(1.0333);">2</span><span class="t" style="left:444.40px;top:128.19px;font-size:11px;font-weight:bold;transform:scaleX(0.9447);">SOLDA</span><span class="t" style="left:484.30px;top:128.19px;font-size:11px;font-weight:bold;transform:scaleX(0.9907);">SOLMIG</span><span class="t" style="left:531.70px;top:128.19px;font-size:11px;font-weight:bold;transform:scaleX(0.9944);">320</span><span class="t" style="left:555.20px;top:128.19px;font-size:11px;font-weight:bold;transform:scaleX(0.9593);">SE01</span><span class="t" style="left:775.52px;top:128.19px;font-size:11px;font-weight:bold;transform:scaleX(1.08);">1</span><span class="t" style="left:788.50px;top:128.19px;font-size:11px;font-weight:bold;transform:scaleX(1.2091);">30/12/2021</span><span class="t" style="left:859.22px;top:128.19px;font-size:11px;font-weight:bold;transform:scaleX(1.0788);">17:07:55,8</span><span class="t" style="left:932.30px;top:128.19px;font-size:11px;font-weight:bold;transform:scaleX(1.2127);">30/12/2021</span><span class="t" style="left:1003.11px;top:128.19px;font-size:11px;font-weight:bold;transform:scaleX(1.0884);">17:00:00</span><span class="t" style="left:1066.40px;top:128.19px;font-size:11px;font-weight:bold;transform:scaleX(1.2109);">30/12/2021</span><span class="t" style="left:1137.12px;top:128.19px;font-size:11px;font-weight:bold;transform:scaleX(1.0791);">17:10:00</span><span class="t" style="left:1200.00px;top:128.19px;font-size:11px;font-weight:bold;transform:scaleX(1.125);">0000:10</span><span class="t" style="left:57.92px;top:147.19px;font-size:11px;font-weight:bold;transform:scaleX(1.08);">1</span><span class="t" style="left:70.00px;top:147.19px;font-size:11px;font-weight:bold;transform:scaleX(0.9316);">GERAL</span><span class="t" style="left:219.40px;top:147.19px;font-size:11px;font-weight:bold;transform:scaleX(1.1);">70</span><span class="t" style="left:238.00px;top:147.19px;font-size:11px;font-weight:bold;transform:scaleX(0.9603);">SOLDAGEM</span><span class="t" style="left:432.80px;top:147.19px;font-size:11px;font-weight:bold;transform:scaleX(1.0333);">2</span><span class="t" style="left:444.40px;top:147.19px;font-size:11px;font-weight:bold;transform:scaleX(0.9447);">SOLDA</span><span class="t" style="left:484.30px;top:147.19px;font-size:11px;font-weight:bold;transform:scaleX(0.9907);">SOLMIG</span><span class="t" style="left:531.70px;top:147.19px;font-size:11px;font-weight:bold;transform:scaleX(0.9944);">320</span><span class="t" style="left:555.20px;top:147.19px;font-size:11px;font-weight:bold;transform:scaleX(0.9593);">SE01</span><span class="t" style="left:775.52px;top:147.19px;font-size:11px;font-weight:bold;transform:scaleX(1.08);">1</span><span class="t" style="left:788.50px;top:147.19px;font-size:11px;font-weight:bold;transform:scaleX(1.2091);">30/12/2021</span><span class="t" style="left:859.22px;top:147.19px;font-size:11px;font-weight:bold;transform:scaleX(1.0788);">17:49:05,8</span><span class="t" style="left:932.30px;top:147.19px;font-size:11px;font-weight:bold;transform:scaleX(1.2127);">30/12/2021</span><span class="t" style="left:1003.11px;top:147.19px;font-size:11px;font-weight:bold;transform:scaleX(1.0884);">17:45:00</span><span class="t" style="left:1066.40px;top:147.19px;font-size:11px;font-weight:bold;transform:scaleX(1.2109);">30/12/2021</span><span class="t" style="left:1137.12px;top:147.19px;font-size:11px;font-weight:bold;transform:scaleX(1.0791);">18:00:00</span><span class="t" style="left:1200.00px;top:147.19px;font-size:11px;font-weight:bold;transform:scaleX(1.125);">0000:15</span><span class="t" style="left:57.92px;top:166.19px;font-size:11px;font-weight:bold;transform:scaleX(1.08);">1</span><span class="t" style="left:70.00px;top:166.19px;font-size:11px;font-weight:bold;transform:scaleX(0.9316);">GERAL</span><span class="t" style="left:219.40px;top:166.19px;font-size:11px;font-weight:bold;transform:scaleX(1.1);">70</span><span class="t" style="left:238.00px;top:166.19px;font-size:11px;font-weight:bold;transform:scaleX(0.9603);">SOLDAGEM</span><span class="t" style="left:432.80px;top:166.19px;font-size:11px;font-weight:bold;transform:scaleX(1.0333);">2</span><span class="t" style="left:444.40px;top:166.19px;font-size:11px;font-weight:bold;transform:scaleX(0.9447);">SOLDA</span><span class="t" style="left:484.30px;top:166.19px;font-size:11px;font-weight:bold;transform:scaleX(0.9907);">SOLMIG</span><span class="t" style="left:531.70px;top:166.19px;font-size:11px;font-weight:bold;transform:scaleX(0.9944);">320</span><span class="t" style="left:555.20px;top:166.19px;font-size:11px;font-weight:bold;transform:scaleX(0.9593);">SE01</span><span class="t" style="left:775.52px;top:166.19px;font-size:11px;font-weight:bold;transform:scaleX(1.08);">1</span><span class="t" style="left:788.50px;top:166.19px;font-size:11px;font-weight:bold;transform:scaleX(1.2091);">03/01/2022</span><span class="t" style="left:859.22px;top:166.19px;font-size:11px;font-weight:bold;transform:scaleX(1.0788);">13:37:03,2</span><span class="t" style="left:932.30px;top:166.19px;font-size:11px;font-weight:bold;transform:scaleX(1.2127);">03/01/2022</span><span class="t" style="left:1003.11px;top:166.19px;font-size:11px;font-weight:bold;transform:scaleX(1.0884);">13:30:00</span><span class="t" style="left:1066.40px;top:166.19px;font-size:11px;font-weight:bold;transform:scaleX(1.2109);">03/01/2022</span><span class="t" style="left:1137.12px;top:166.19px;font-size:11px;font-weight:bold;transform:scaleX(1.0791);">13:45:00</span><span class="t" style="left:1200.00px;top:166.19px;font-size:11px;font-weight:bold;transform:scaleX(1.125);">0000:15</span><span class="t" style="left:55.01px;top:536.79px;font-size:11px;transform:scaleX(0.9857);"><u>I</u>ncluir</span><span class="t" style="left:142.61px;top:536.79px;font-size:11px;transform:scaleX(0.9891);">Inc.<u>M</u>últipla</span><span class="t" style="left:256.00px;top:536.79px;font-size:11px;transform:scaleX(0.9875);">A<u>l</u>terar</span><span class="t" style="left:347.61px;top:536.79px;font-size:11px;transform:scaleX(0.987);"><u>C</u>onsultar</span><span class="t" style="left:457.66px;top:536.79px;font-size:11px;transform:scaleX(0.9375);"><u>E</u>xcluir</span><span class="t" style="left:40.60px;top:559.79px;font-size:11px;transform:scaleX(0.9729);"><u>O</u>bservação</span><span class="t" style="left:139.70px;top:559.79px;font-size:11px;transform:scaleX(0.9067);">OP</span><span class="t" style="left:157.30px;top:559.79px;font-size:11px;transform:scaleX(0.9565);">vinc<u>u</u>lada</span><span class="t" style="left:237.14px;top:559.79px;font-size:11px;transform:scaleX(0.8605);"><u>P</u>osição</span><span class="t" style="left:274.70px;top:559.79px;font-size:11px;transform:scaleX(0.9417);">da</span><span class="t" style="left:290.70px;top:559.79px;font-size:11px;transform:scaleX(0.96);">OP</span><span class="t" style="left:338.76px;top:559.79px;font-size:11px;transform:scaleX(0.94);"><u>R</u>ecurso</span><span class="t" style="left:381.30px;top:559.79px;font-size:11px;transform:scaleX(1.0435);">ativo</span><span class="t" style="left:444.97px;top:559.79px;font-size:11px;transform:scaleX(1.0333);">C.</span><span class="t" style="left:460.00px;top:559.79px;font-size:11px;transform:scaleX(0.8917);">de</span><span class="t" style="left:474.70px;top:559.79px;font-size:11px;transform:scaleX(0.9731);">cus<u>t</u>o</span><span class="t" style="left:51.44px;top:582.79px;font-size:11px;transform:scaleX(0.9611);"><u>F</u>ábrica</span><span class="t" style="left:147.40px;top:582.79px;font-size:11px;transform:scaleX(0.9913);">Opera<u>d</u>or</span><span class="t" style="left:234.41px;top:582.79px;font-size:11px;transform:scaleX(0.9861);">Re<u>g</u>.Coletados</span><span class="t" style="left:1166.42px;top:536.79px;font-size:11px;transform:scaleX(0.9828);">F5-Atuali<u>z</u>ar</span><span class="t" style="left:1266.40px;top:536.79px;font-size:11px;">F9-Filtros</span><span class="t" style="left:1287.68px;top:580.19px;font-size:11px;transform:scaleX(0.9158);"><u>S</u>air</span>
</body>
</html>
